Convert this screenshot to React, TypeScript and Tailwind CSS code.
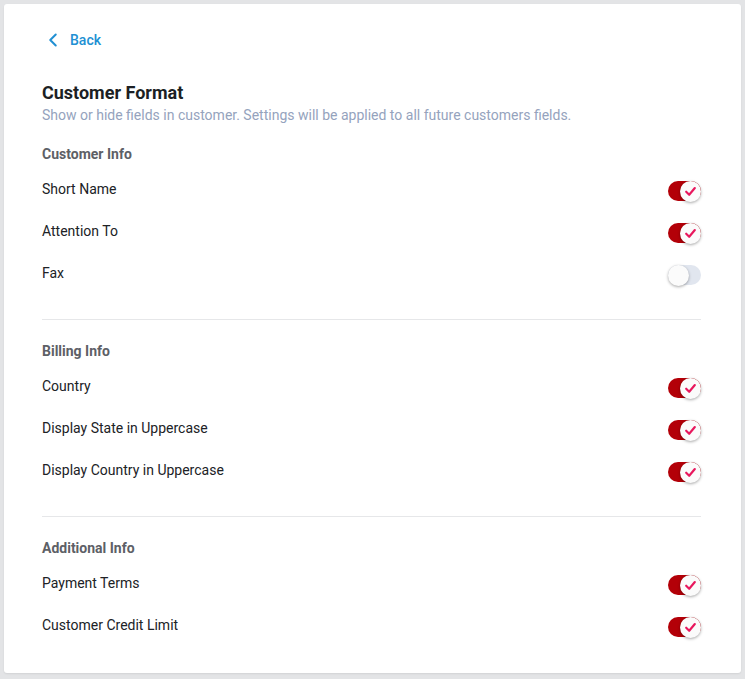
import { ChevronLeft } from 'lucide-react';

// ---------------------------------------------------------------------------
// Data
// ---------------------------------------------------------------------------

type Field = { label: string; on: boolean };
type Section = { title: string; fields: Field[] };

const sections: Section[] = [
  {
    title: 'Customer Info',
    fields: [
      { label: 'Short Name', on: true },
      { label: 'Attention To', on: true },
      { label: 'Fax', on: false },
    ],
  },
  {
    title: 'Billing Info',
    fields: [
      { label: 'Country', on: true },
      { label: 'Display State in Uppercase', on: true },
      { label: 'Display Country in Uppercase', on: true },
    ],
  },
  {
    title: 'Additional Info',
    fields: [
      { label: 'Payment Terms', on: true },
      { label: 'Customer Credit Limit', on: true },
    ],
  },
];

// ---------------------------------------------------------------------------
// Toggle
// ---------------------------------------------------------------------------

function Toggle({ on }: { on: boolean }) {
  return (
    <div
      className={
        on
          ? 'mt-1 flex h-5 w-[33px] items-center justify-end rounded-full bg-[#b30008]'
          : 'mt-1 flex h-5 w-[33px] items-center justify-start rounded-full bg-[#e1e6ef]'
      }
    >
      <div className="flex h-[21px] w-[21px] items-center justify-center rounded-full bg-[#fbfbfb] shadow-[0_1px_3px_rgba(0,0,0,0.35)]">
        {on && (
          <svg width="13" height="13" viewBox="0 0 12 12" fill="none">
            <path
              d="M2 6.2 L4.8 9 L10 2.8"
              stroke="#e8175d"
              strokeWidth="2"
              strokeLinecap="round"
              strokeLinejoin="round"
            />
          </svg>
        )}
      </div>
    </div>
  );
}

// ---------------------------------------------------------------------------
// Component
// ---------------------------------------------------------------------------

export default function App() {
  return (
    <div className="min-h-[679px] bg-[#e3e4e6] p-1 font-['Roboto',sans-serif]">
      <div className="rounded-[3px] bg-white pt-[26px] pr-10 pb-[27px] pl-[38px] shadow-[0_1px_2px_rgba(0,0,0,0.08)]">
        <button className="flex h-5 items-center gap-[6px] text-[14px] font-medium text-[#2190d3]">
          <ChevronLeft className="h-[22px] w-[22px]" strokeWidth={2.2} />
          <span>Back</span>
        </button>

        <h1 className="mt-[31px] text-[18px] leading-6 font-bold text-[#1c1f24]">Customer Format</h1>
        <p className="text-[14px] leading-5 text-[#95a3bd]">
          Show or hide fields in customer. Settings will be applied to all future customers fields.
        </p>

        <div className="mt-[19px]">
          {sections.map((section, i) => (
            <div key={section.title}>
              {i > 0 && <div className="mt-[25px] mb-[21px] h-px bg-[#e6e7e9]" />}
              <h2 className="mb-1 text-[14px] leading-5 font-bold text-[#5d6066]">{section.title}</h2>
              {section.fields.map((field) => (
                <div key={field.label} className="flex h-[42px] items-center justify-between">
                  <span className="text-[14px] text-[#202226]">{field.label}</span>
                  <Toggle on={field.on} />
                </div>
              ))}
            </div>
          ))}
        </div>
      </div>
    </div>
  );
}
